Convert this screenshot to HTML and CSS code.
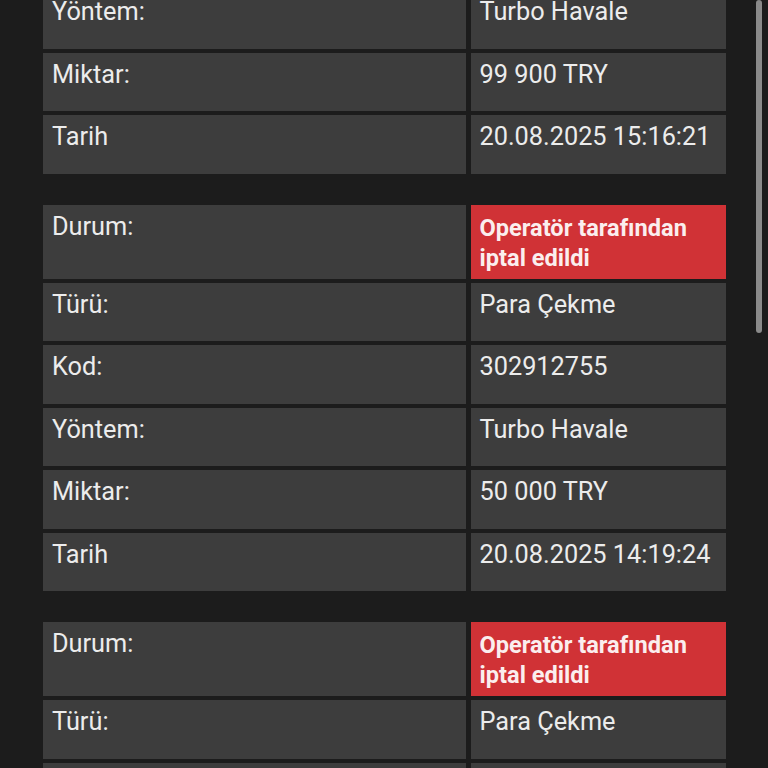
FILE: index.html
```html
<!DOCTYPE html>
<html lang="tr">
<head>
<meta charset="utf-8">
<title>İşlem Geçmişi</title>
<link rel="stylesheet" href="styles.css">
</head>
<body>
<main class="page">
  <section class="group group-first">
    <div class="cell label">Yöntem:</div><div class="cell value">Turbo Havale</div>
    <div class="cell label">Miktar:</div><div class="cell value">99 900 TRY</div>
    <div class="cell label">Tarih</div><div class="cell value">20.08.2025 15:16:21</div>
  </section>
  <section class="group">
    <div class="cell label">Durum:</div><div class="cell value status">Operatör tarafından iptal edildi</div>
    <div class="cell label">Türü:</div><div class="cell value">Para Çekme</div>
    <div class="cell label">Kod:</div><div class="cell value">302912755</div>
    <div class="cell label">Yöntem:</div><div class="cell value">Turbo Havale</div>
    <div class="cell label">Miktar:</div><div class="cell value">50 000 TRY</div>
    <div class="cell label">Tarih</div><div class="cell value">20.08.2025 14:19:24</div>
  </section>
  <section class="group">
    <div class="cell label">Durum:</div><div class="cell value status">Operatör tarafından iptal edildi</div>
    <div class="cell label">Türü:</div><div class="cell value">Para Çekme</div>
    <div class="cell label">Kod:</div><div class="cell value">302911840</div>
    <div class="cell label">Yöntem:</div><div class="cell value">Turbo Havale</div>
  </section>
</main>
<div class="scrollbar"></div>
</body>
</html>
```

FILE: styles.css
```css
html, body {
  margin: 0;
  padding: 0;
  height: 100%;
  overflow: hidden;
  background: #1c1c1c;
}
body {
  font-family: Roboto, "Liberation Sans", sans-serif;
  color: #ececec;
}
.page {
  padding: 0 43px;
}
.group {
  display: grid;
  grid-template-columns: 423px 255px;
  column-gap: 4.5px;
  row-gap: 4px;
  margin-top: 31px;
}
.group-first {
  margin-top: -10px;
}
.cell {
  background: #3d3d3d;
  box-sizing: border-box;
  min-height: 58.5px;
  padding: 8px 9px 6px;
  font-size: 25.3px;
  line-height: 28px;
}
.status {
  background: #d03236;
  color: #fbeeee;
  font-weight: 700;
  font-size: 23.6px;
  line-height: 30px;
  padding: 8px 9px 6px;
}
.scrollbar {
  position: fixed;
  top: 0;
  right: 6px;
  width: 6px;
  height: 333px;
  border-radius: 3px;
  background: #8a8a8a;
}
```
